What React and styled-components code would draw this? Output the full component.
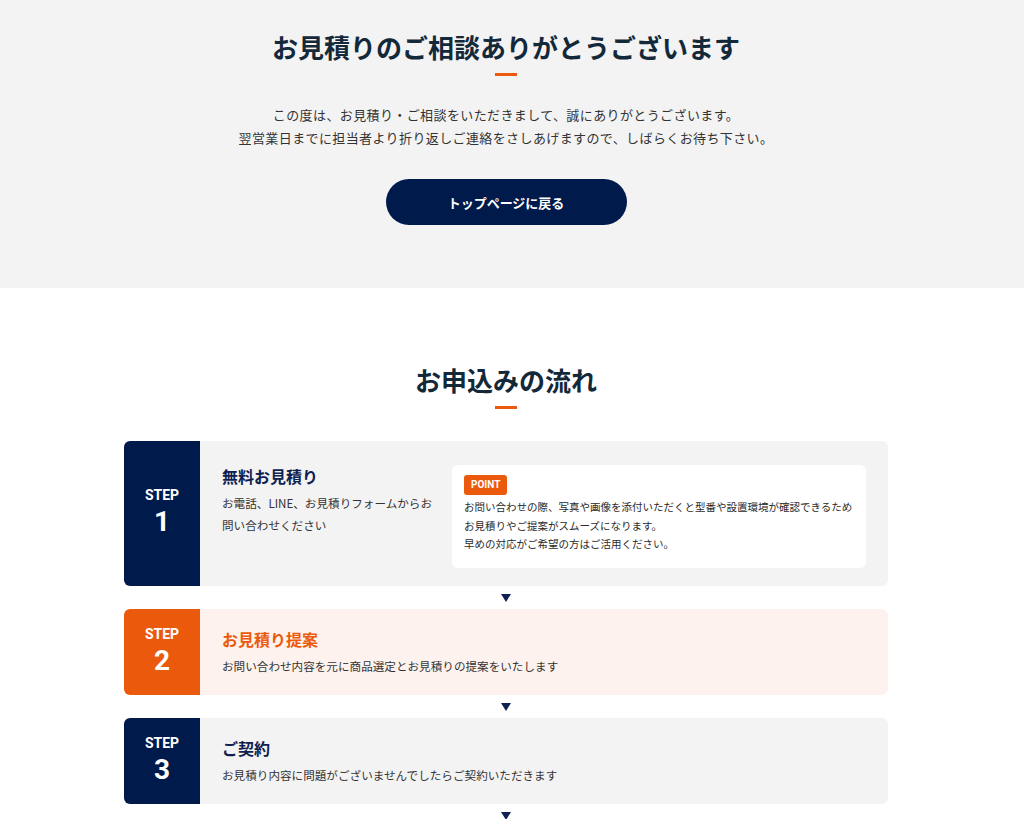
import React from 'react';
import styled, { createGlobalStyle } from 'styled-components';

const GlobalStyle = createGlobalStyle`
  body {
    margin: 0;
    background: #ffffff;
    font-family: "Noto Sans CJK JP", "Noto Sans", sans-serif;
    color: #333333;
  }
`;

const Thanks = styled.section`
  background: #f3f3f3;
  padding: 29px 0 63px;
`;

const Flow = styled.section`
  padding: 74px 0 40px;
`;

const Inner = styled.div`
  padding-right: 12px;
  display: flex;
  flex-direction: column;
  align-items: center;
  text-align: center;
`;

const Heading = styled.h2`
  margin: 0;
  font-size: 26px;
  line-height: 36px;
  font-weight: 700;
  color: #13293a;
`;

const Bar = styled.div`
  width: 22px;
  height: 3px;
  background: #eb5a0c;
  margin: 8px auto 0;
`;

const Lead = styled.p`
  margin: 27px 0 0;
  font-size: 13px;
  letter-spacing: 0.03em;
  line-height: 23px;
  color: #333333;
`;

const BackButton = styled.a`
  display: inline-flex;
  align-items: center;
  justify-content: center;
  width: 241px;
  height: 46px;
  margin-top: 30px;
  border-radius: 23px;
  background: #001a4b;
  color: #ffffff;
  font-size: 13px;
  font-weight: 700;
  text-decoration: none;
`;

const Steps = styled.div`
  width: 764px;
  margin-top: 32px;
  display: flex;
  flex-direction: column;
  align-items: center;
  text-align: left;
`;

const Card = styled.div`
  width: 100%;
  display: flex;
  border-radius: 6px;
  overflow: hidden;
  background: ${p => (p.$accent ? '#fdf2ee' : '#f3f3f3')};
`;

const Label = styled.div`
  width: 76px;
  flex: none;
  display: flex;
  flex-direction: column;
  align-items: center;
  justify-content: center;
  background: ${p => (p.$accent ? '#eb5a0c' : '#001a4b')};
  color: #ffffff;
  font-family: Roboto, "Liberation Sans", sans-serif;
  font-weight: 700;
`;

const StepWord = styled.span`
  font-size: 14px;
  line-height: 16px;
`;

const StepNum = styled.span`
  font-size: 28px;
  line-height: 34px;
  margin-top: 2px;
`;

const Body = styled.div`
  flex: 1;
  display: flex;
  gap: 18px;
  padding: ${p => (p.$tall ? '24px 22px 18px' : '19px 22px 18px')};
`;

const TextCol = styled.div`
  width: ${p => (p.$narrow ? '212px' : 'auto')};
  flex: ${p => (p.$narrow ? 'none' : '1')};
`;

const StepTitle = styled.h3`
  margin: 0;
  font-size: 16px;
  line-height: 22px;
  font-weight: 700;
  color: ${p => (p.$accent ? '#eb5a0c' : '#0f2150')};
`;

const StepText = styled.p`
  margin: 5px 0 0;
  font-size: 11.6px;
  line-height: 22px;
  color: #333333;
  line-break: anywhere;
`;

const Point = styled.div`
  flex: 1;
  background: #ffffff;
  border-radius: 6px;
  padding: 10px 12px 14px;
`;

const Badge = styled.span`
  display: block;
  width: fit-content;
  background: #eb5a0c;
  color: #ffffff;
  font-family: Roboto, "Liberation Sans", sans-serif;
  font-size: 10px;
  font-weight: 700;
  line-height: 20px;
  padding: 0 7px;
  border-radius: 3px;
`;

const PointText = styled.p`
  margin: 3px 0 0;
  font-size: 10.5px;
  line-height: 18.5px;
  color: #2b2b2b;
  white-space: nowrap;
`;

const Arrow = styled.div`
  width: 0;
  height: 0;
  margin: 8px 0 7px;
  border-left: 5px solid transparent;
  border-right: 5px solid transparent;
  border-top: 8px solid #0f2150;
`;

export default function App() {
  return (
    <>
      <GlobalStyle />
      <Thanks>
        <Inner>
          <Heading>お見積りのご相談ありがとうございます</Heading>
          <Bar />
          <Lead>
            この度は、お見積り・ご相談をいただきまして、誠にありがとうございます。
            <br />
            翌営業日までに担当者より折り返しご連絡をさしあげますので、しばらくお待ち下さい。
          </Lead>
          <BackButton href="#">トップページに戻る</BackButton>
        </Inner>
      </Thanks>

      <Flow>
        <Inner>
          <Heading>お申込みの流れ</Heading>
          <Bar />
          <Steps>
            <Card>
              <Label>
                <StepWord>STEP</StepWord>
                <StepNum>1</StepNum>
              </Label>
              <Body $tall>
                <TextCol $narrow>
                  <StepTitle>無料お見積り</StepTitle>
                  <StepText>お電話、LINE、お見積りフォームからお問い合わせください</StepText>
                </TextCol>
                <Point>
                  <Badge>POINT</Badge>
                  <PointText>
                    お問い合わせの際、写真や画像を添付いただくと型番や設置環境が確認できるため
                    <br />
                    お見積りやご提案がスムーズになります。
                    <br />
                    早めの対応がご希望の方はご活用ください。
                  </PointText>
                </Point>
              </Body>
            </Card>
            <Arrow />
            <Card $accent>
              <Label $accent>
                <StepWord>STEP</StepWord>
                <StepNum>2</StepNum>
              </Label>
              <Body>
                <TextCol>
                  <StepTitle $accent>お見積り提案</StepTitle>
                  <StepText>お問い合わせ内容を元に商品選定とお見積りの提案をいたします</StepText>
                </TextCol>
              </Body>
            </Card>
            <Arrow />
            <Card>
              <Label>
                <StepWord>STEP</StepWord>
                <StepNum>3</StepNum>
              </Label>
              <Body>
                <TextCol>
                  <StepTitle>ご契約</StepTitle>
                  <StepText>お見積り内容に問題がございませんでしたらご契約いただきます</StepText>
                </TextCol>
              </Body>
            </Card>
            <Arrow />
          </Steps>
        </Inner>
      </Flow>
    </>
  );
}
